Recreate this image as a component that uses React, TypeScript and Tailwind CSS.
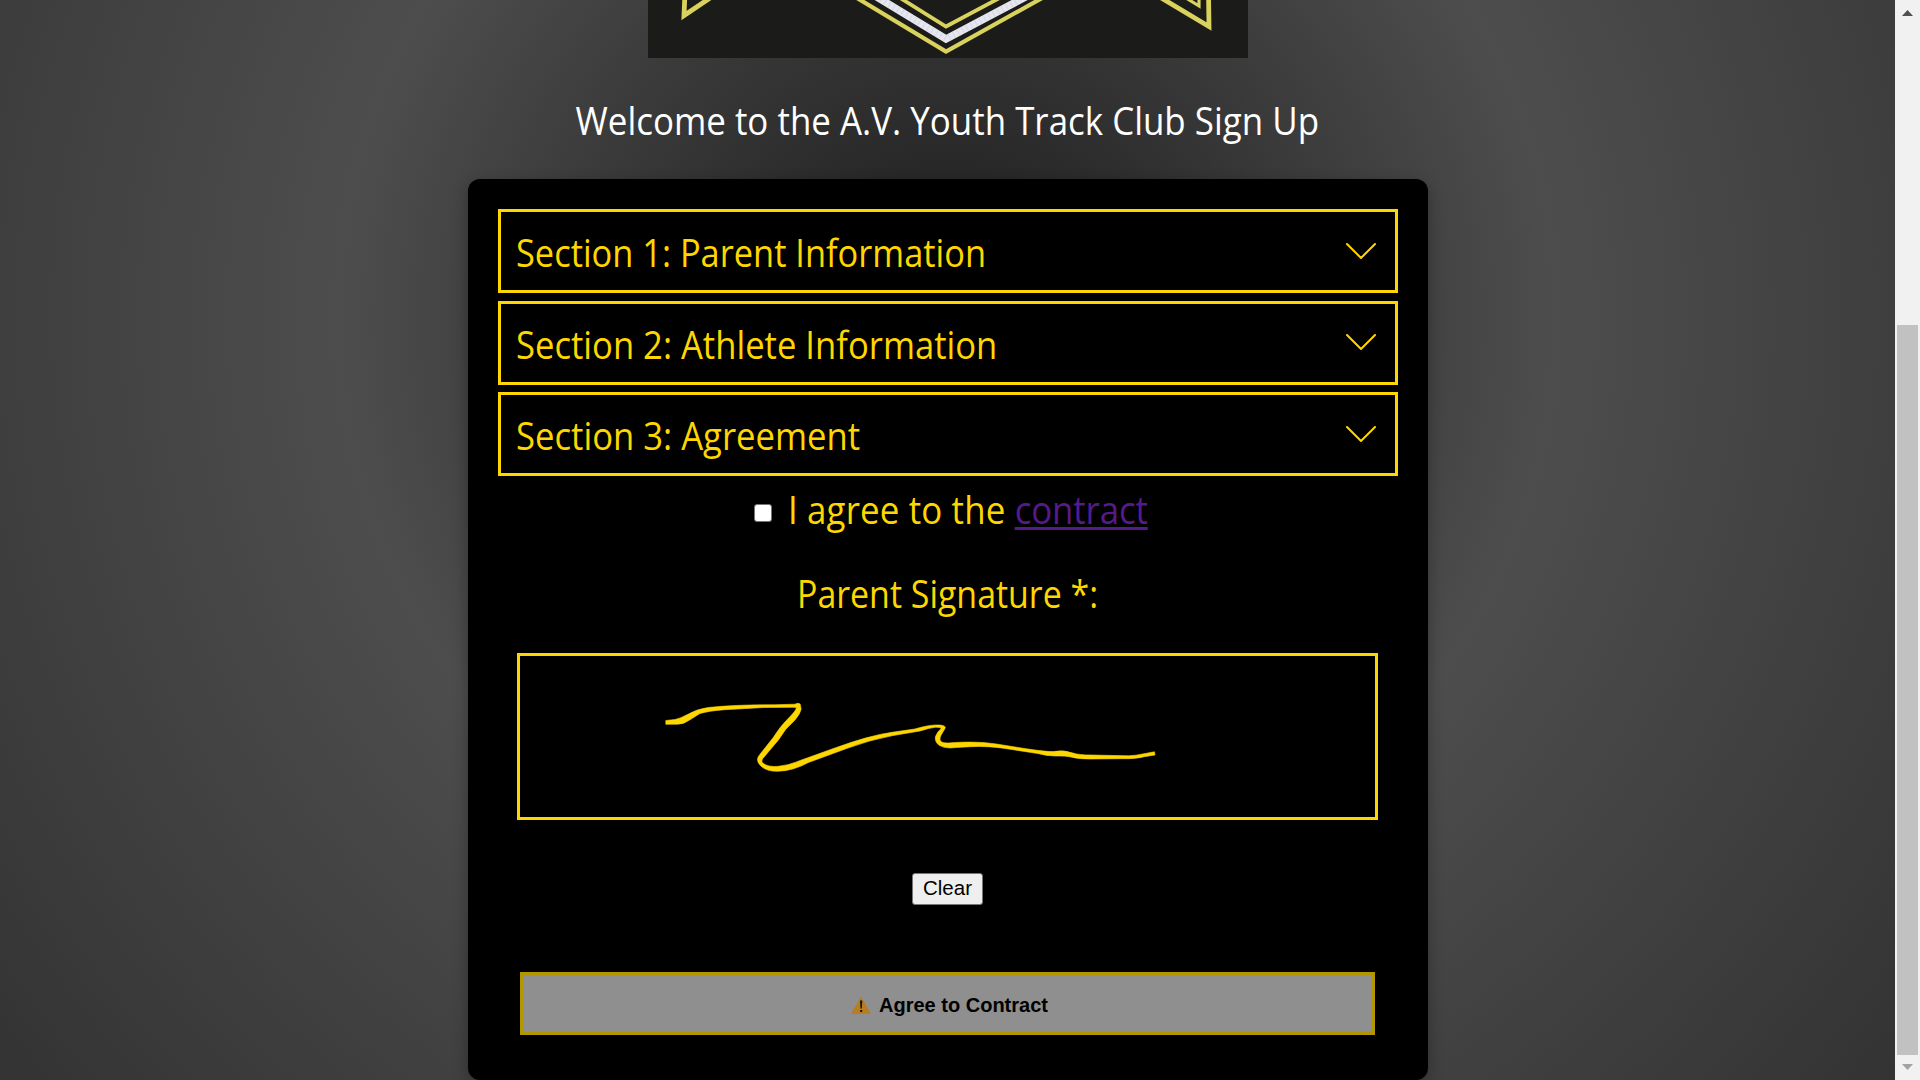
const sections = [
  { title: 'Section 1: Parent Information', box: 'mb-2', text: 'scale-x-[0.917]', icon: '' },
  { title: 'Section 2: Athlete Information', box: 'mb-[7px]', text: 'scale-x-[0.923]', icon: '-mt-0.5' },
  { title: 'Section 3: Agreement', box: '', text: 'scale-x-[0.924]', icon: '' },
];

function Emblem() {
  return (
    <svg className="block h-[58px] w-[600px] bg-[#1b1b19]" viewBox="648 0 600 58" fill="none">
      <g stroke="#d9d25c" strokeLinejoin="miter" strokeMiterlimit="10">
        <path d="M685 -8 L684 15.500 L716 -6" strokeWidth="4.800" />
        <path d="M852 -5 L946 51.500 L1053 -8" strokeWidth="4.200" />
        <path d="M897 -4 L946 26.500 L1007 -6" strokeWidth="3.800" />
        <path d="M1153 -7 L1209 26.500 L1208.500 -7" strokeWidth="4.800" />
        <path d="M1178 -7 L1199 6 L1199 -7" strokeWidth="3.200" />
      </g>
      <path d="M872 -6 L946 39 L1031 -6" stroke="#e6e6f0" strokeWidth="7.500" />
      <path d="M872 -6 L946 39 L1031 -6" stroke="#d6d6e2" strokeWidth="6.500" strokeDasharray="1 4" />
    </svg>
  );
}

function Chevron({ className }: { className: string }) {
  return (
    <svg className={`h-4 w-[30px] ${className}`} viewBox="0 0 30 16" fill="none" stroke="#ffd700" strokeWidth="2" strokeLinecap="round">
      <path d="M1 1 L15 15 L29 1" />
    </svg>
  );
}

function Signature() {
  return (
    <svg className="block h-[161px] w-[855px]" viewBox="520 656 855 161" fill="#ffd700" stroke="#ffd700" strokeWidth="0.6" strokeLinejoin="round">
      <path transform="translate(-21.200 0) scale(1.0331 1)" d="M665 720.500 L674 719.500 Q680 718 686 714.500 Q695 709 706 707.500 Q735 704.500 770 704.800 L790 704.200 Q793 702.500 795 704 L796 709 Q795 714 790 720 L781 729.500 L774 740 Q765 751 758.500 759 Q757 762 759.500 763.500 Q764 767.200 774 766.300 Q784 765.500 795 760.500 L830 747.500 Q862 735.500 884 732.300 L906 729 Q921 724.300 930 725 Q936 725.500 935.500 728 L931.500 735 Q929 740 932 742 Q935 743.500 942 742.700 Q966 741 985 744 L1014 748.800 Q1035 752 1040 751.500 Q1050 749.500 1059 753 Q1065 755 1077 755 L1113 755.800 Q1120 755.500 1128 753.700 L1138 751.800 L1138.500 755 L1128 756.700 Q1120 759 1106 758.700 L1075 759 Q1064 759 1057 757 Q1052 755.500 1042 756 Q1034 756 1025 753.500 L1000 749.500 Q977 745.500 960 746.700 L946 747.500 Q936 749 930 745.500 Q925 742 926 736.500 Q928 731.500 931.500 728.500 Q931 727 926 727.200 Q920 728 911 731 L885 735.500 Q862 740 840 748.500 L803 762.500 Q788 771 773 771.300 Q763 771.500 757 766 Q751 760 756 754.500 L769 737.500 Q776 726 783 719 Q791 711 791.500 707.500 L788 707.300 L760 707.500 L722 709.700 Q706 711 698 713.500 L688 720 Q682 724.500 676 724.200 L665 724.300 Z" />
    </svg>
  );
}

function Warning() {
  return (
    <svg className="h-[18px] w-5" viewBox="0 0 20 18">
      <path d="M10 0.500 L19.500 17 L19 18 H1 L0.500 17 Z" fill="#b77d20" />
      <path d="M9 4.500 H11.300 L10.800 12.500 H9.500 Z M9.200 14 H11.200 V16 H9.200 Z" fill="#17130c" />
    </svg>
  );
}

export default function App() {
  return (
    <div className="flex h-[1080px] w-[1920px] overflow-hidden font-['Open_Sans','Noto_Sans',sans-serif] text-[37.500px] leading-[50px]">
      <main className="flex h-[1080px] w-[1895px] flex-col items-center bg-[radial-gradient(circle_1215px_at_947px_318px,#1c1c1c_0%,#4d4d4d_50%,#333333_100%)]">
        <Emblem />
        <h1 className="mt-[38px] mb-[33px] whitespace-nowrap scale-x-[0.931] text-white">
          Welcome to the A.V. Youth Track Club Sign Up
        </h1>
        <div className="flex h-[901px] w-[960px] shrink-0 flex-col items-center rounded-xl bg-black pt-[30px] text-[#ffd700] shadow-[0_5px_15px_rgba(0,0,0,0.3)]">
          {sections.map((s) => (
            <div key={s.title} className={`flex h-[84px] w-[900px] items-center justify-between border-3 border-[#ffd700] pr-[19px] pl-[15px] ${s.box}`}>
              <span className={`origin-left whitespace-nowrap pt-1 ${s.text}`}>{s.title}</span>
              <Chevron className={s.icon} />
            </div>
          ))}
          <label className="mt-[9px] flex w-[960px] items-center pl-[286px] whitespace-nowrap">
            <span className="mt-1.5 mr-4 size-[18px] shrink-0 rounded-[3px] border border-[#767676] bg-white" />
            <span className="origin-left scale-x-[0.93]">
              <span className="tracking-[0.15px]">I agree to the{' '}</span>
              <a className="tracking-[-0.15px] text-[#551a8b] underline decoration-[3px] underline-offset-[3px]">contract</a>
            </span>
          </label>
          <p className="mt-[34px] whitespace-nowrap scale-x-[0.904]">Parent Signature *:</p>
          <div className="mt-[34px] h-[167px] w-[861px] border-3 border-[#ffd700]">
            <Signature />
          </div>
          <button className="mt-[53px] h-8 w-[71px] rounded-[3px] border border-[#767676] bg-[#efefef] pb-0.5 font-['Liberation_Sans',Arial,sans-serif] text-[20.500px] leading-[28px] text-black">
            Clear
          </button>
          <button className="mt-[67px] flex h-[63px] w-[855px] items-center justify-center gap-2 border-3 border-[#b39700] bg-[#8f8f8f] pt-0.5 pl-1 font-['Liberation_Sans',Arial,sans-serif] text-[20px] leading-6 font-bold text-black">
            <Warning />
            Agree to Contract
          </button>
        </div>
      </main>
      <aside className="flex h-[1080px] w-[25px] flex-col items-center bg-[#f1f1f1]">
        <svg className="mt-2.5 h-1.5 w-[11px]" viewBox="0 0 11 6">
          <path d="M5.500 0 L11 6 H0 Z" fill="#505050" />
        </svg>
        <div className="mt-[309px] h-[730px] w-[21px] bg-[#c1c1c1]" />
        <svg className="mt-[9px] h-1.5 w-[11px]" viewBox="0 0 11 6">
          <path d="M5.500 6 L11 0 H0 Z" fill="#a3a3a3" />
        </svg>
      </aside>
    </div>
  );
}
